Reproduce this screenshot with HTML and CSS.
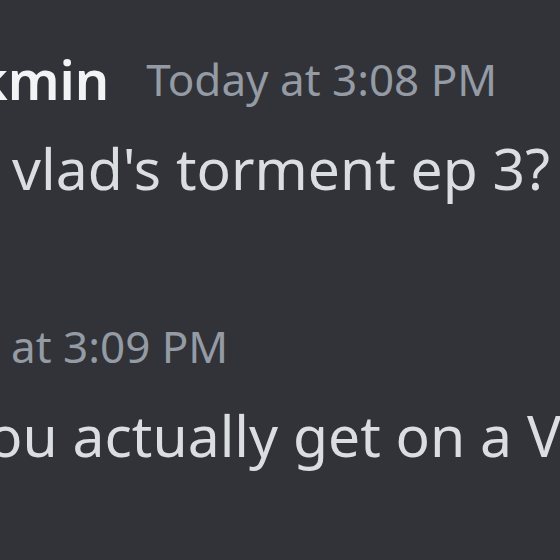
FILE: index.html
```html
<!DOCTYPE html>
<html>
<head>
<meta charset="utf-8">
<link rel="stylesheet" href="styles.css">
</head>
<body>
<main class="chat">
  <section class="msg first">
    <div class="header">
      <span class="user">kmin</span>
      <span class="time">Today at 3:08 PM</span>
    </div>
    <div class="content c1">vlad's torment ep 3?</div>
  </section>
  <section class="msg second">
    <div class="header">
      <span class="time t2">at 3:09 PM</span>
    </div>
    <div class="content c2">ou actually get on a V</div>
  </section>
</main>
</body>
</html>
```
FILE: styles.css
```css
html, body {
  margin: 0;
  padding: 0;
  width: 560px;
  height: 560px;
  overflow: hidden;
  background: #313338;
}
.chat {
  font-family: "Noto Sans", "Open Sans", sans-serif;
  white-space: nowrap;
  overflow: hidden;
  width: 560px;
  height: 560px;
}
.msg {
  display: flex;
  flex-direction: column;
}
.header {
  display: flex;
  align-items: flex-end;
  gap: 37px;
  height: 70px;
}
.user {
  color: #f2f3f5;
  font-size: 54px;
  font-weight: 600;
  line-height: 70px;
  margin-left: -24px;
}
.time {
  color: #949ba4;
  font-size: 44px;
  line-height: 70px;
}
.content {
  color: #dbdee1;
  font-size: 57px;
  line-height: 80px;
  padding-top: 14px;
}
.first {
  padding-top: 44px;
}
.c1 {
  margin-left: 12px;
}
.second {
  padding-top: 103px;
}
.t2 {
  margin-left: 11px;
}
.c2 {
  margin-left: -12px;
}
```
